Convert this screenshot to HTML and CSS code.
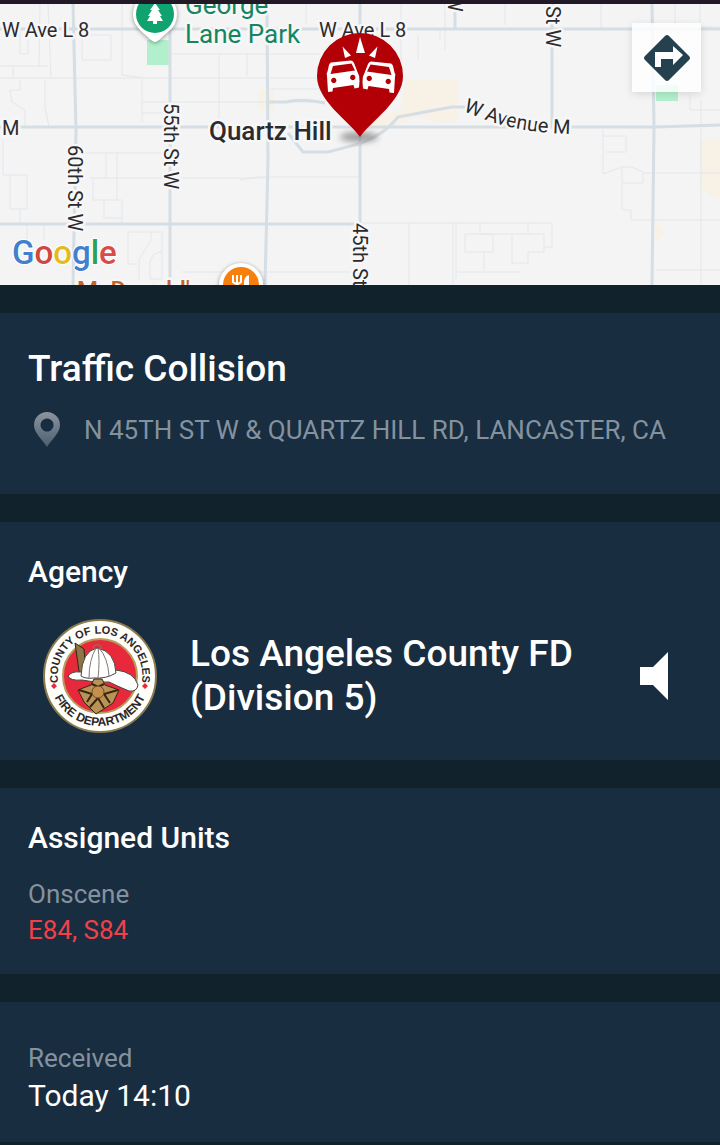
FILE: index.html
```
<!DOCTYPE html>
<html lang="en">
<head>
  <meta charset="UTF-8">
  <meta name="viewport" content="width=device-width, initial-scale=1.0">
  <title>Traffic Collision</title>
  <link rel="stylesheet" href="styles.css">
</head>
<body>

<!-- Map -->
<div class="map">
  <svg class="map-canvas" viewBox="0 4 720 281" preserveAspectRatio="xMidYMid slice" role="img" aria-label="Map of Quartz Hill">
    <defs>
      <path id="avenueM" d="M463 111 C 487 120, 515 135, 585 134" />
      <filter id="soft" x="-50%" y="-100%" width="200%" height="300%"><feGaussianBlur stdDeviation="3" /></filter>
    </defs>

    <!-- areas -->
    <path class="area-sand" d="M406 80 H457 V122 H436 L418 116 L385 130 L350 126 L400 110Z M259 90h15v20h-15z M701 140 H720 V200 L710 196 L701 188Z M655 222 q10 6 9 12 q-1 6 -9 6z" />
    <path class="area-green" d="M147 40h22v25h-22z M656 85h22v16h-22z" />

    <!-- small streets -->
    <g class="street">
      <path d="M0 66H48 M0 78H140 M40 4L39 66 M48 4L51 78 M20 30V54H28V22 M13 66V78 M82 35h29v25h-29z M20 80V90H10L12 102L25 110V126 M45 80V108L49 126" />
      <path d="M122 4V75L145 78H360 M172 54H320 M142 78V122 M142 102H320 M142 113H165 M219 54V126 M306 4V24 M3 140V175H27V209H10V175 M20 209V223" />
      <path d="M85 153H165 M90 178H265 M106 153V178 M117 153V200 M93 178V200H122V223 M104 200V218H122 M27 225V240 M44 225V240 M128 232H162V279H150V262Q152 252 162 252 M128 232V264H137 M151 232V240L139 260V280 M182 272H360" />
      <path d="M240 180L258 177H360 M270 89H320 M247 54V76 M401 4V80 M418 35V60 M440 28V40 M445 50V4 M505 4V25 M601 4V28 M675 4V23 M700 4V28 M701 27H720" />
      <path d="M362 223H552V247H544 M409 223V285 M453 223V285 M456 223V279 M465 234H493V252H465Z M457 272H520 M480 223V234H544V252H528V263H512V234 M528 223V234 M484 253V271" />
      <path d="M603 130V174L622 167H632L645 173H720 M603 136H626V152H606 M622 168V210H631V220H720 M643 173V183H623 M656 270H720 M701 100V285 M690 95V110H720" />
    </g>

    <!-- roads -->
    <g class="road">
      <path d="M0 29H720 M0 127H655L720 125 M0 224H362" />
      <path d="M73 4L76 130L73 285 M170 4V285 M267 4L268 160L265 285 M360 4V260 M455 4V29 M552 4V127 M652 4L654 127L652 285" />
      <path d="M268 102H286Q300 98 325 103 M288 133L303 152H328L362 143Q386 133 398 117L430 111L452 107H466" />
    </g>

    <!-- place labels -->
    <g class="label">
      <text x="2" y="37">W Ave L 8</text>
      <text x="319" y="37">W Ave L 8</text>
      <text x="2" y="135">M</text>
      <text transform="translate(164 103) rotate(90)">55th St W</text>
      <text transform="translate(68 145) rotate(90)">60th St W</text>
      <text transform="translate(353 223) rotate(90)">45th St W</text>
      <text transform="translate(546 6) rotate(90)">St W</text>
      <text transform="translate(448 -6) rotate(90)">W</text>
      <text><textPath href="#avenueM">W Avenue M</textPath></text>
    </g>
    <text class="label-city" x="209" y="140">Quartz Hill</text>
    <text class="label-park" x="185" y="14">George</text>
    <text class="label-park" x="185" y="43">Lane Park</text>
    <text class="label-food" x="77" y="298">McDonald's</text>

    <!-- park pin -->
    <path class="pin-rim" d="M155 -8a22 22 0 0 1 22 22q0 11-8 17l-10 9q-4 4-8 0l-10-9q-8-7-8-17a22 22 0 0 1 22-22z" />
    <circle cx="155" cy="14" r="19" fill="#10a36f" />
    <path fill="#fff" d="M155 3l5 7h-2l4 6h-2l3 5h-6v3h-4v-3h-6l3-5h-2l4-6h-2z" />

    <!-- restaurant pin -->
    <circle class="pin-rim" cx="241" cy="285" r="22" />
    <circle cx="241" cy="285" r="18" fill="#f77f0c" />
    <path fill="none" stroke="#fff" stroke-width="2" d="M233 275v7q4 4 8 0v-7 M237 275v12" />
    <path fill="#fff" d="M249 275v12h-5v-6q1-5 5-6z" />

    <!-- incident pin -->
    <ellipse cx="359" cy="137" rx="19" ry="5" fill="#777" opacity=".7" filter="url(#soft)" />
    <path fill="#b30006" d="M360 137C349 121 317 101 317 76a43 43 0 0 1 86 0c0 25-32 45-43 61z" />
    <g fill="#fff">
      <path d="M360 37l5 16h-9z M342.5 46.5l8.5 9-6 2.5z M377.5 46.5l-8.5 9 6 2.5z" />
      <path id="car" fill-rule="evenodd" d="M331 62.5L351 60.5Q353 60.5 354 63L357.5 72Q360 76 359.5 81L359 87.5L354.5 88.5L353.5 85L333 88L332.5 91.5L328 92L327 76Q326 73 327.5 71.5L329 65Q329.5 63 331 62.5Z M333 66L330.5 74L355 70.5L351.5 63.5Z M333.7 77.8a2.7 2.7 0 1 0 .1 0z M352.7 74.8a2.7 2.7 0 1 0 .1 0z" />
      <use href="#car" transform="matrix(-1 0 0 1 722 1)" />
    </g>

    <text class="map-brand" x="12" y="264"><tspan fill="#427fcc">G</tspan><tspan fill="#cf4740">o</tspan><tspan fill="#e6b91e">o</tspan><tspan fill="#427fcc">g</tspan><tspan fill="#2e9f57">l</tspan><tspan fill="#d94b48">e</tspan></text>
  </svg>

  <button class="directions-btn" type="button" aria-label="Directions">
    <svg width="48" height="48" viewBox="0 0 48 48">
      <path fill="#25404f" d="M22 2Q24 0 26 2L46 22Q48 24 46 26L26 46Q24 48 22 46L2 26Q0 24 2 22Z" />
      <path fill="#fff" d="M12 33V18H30V12L40 21L30 31V25H18V33Z" />
    </svg>
  </button>
</div>

<!-- Incident -->
<section class="card incident">
  <h1 class="title">Traffic Collision</h1>
  <div class="address">
    <svg class="address-icon" width="26" height="36" viewBox="0 0 26 36">
      <defs>
        <linearGradient id="pinFade" x1="0" y1="0" x2="0" y2="1">
          <stop offset="0" stop-color="#8b959f" />
          <stop offset="1" stop-color="#4b5e70" />
        </linearGradient>
      </defs>
      <path fill="url(#pinFade)" fill-rule="evenodd" d="M13 0a13 13 0 0 1 13 13c0 8-8 14-13 22C8 27 0 21 0 13A13 13 0 0 1 13 0z M13 6.500a6.500 6.500 0 1 0 .1 0z" />
    </svg>
    <span>N 45TH ST W &amp; QUARTZ HILL RD, LANCASTER, CA</span>
  </div>
</section>

<!-- Agency -->
<section class="card agency">
  <h2 class="heading">Agency</h2>
  <div class="agency-row">
    <svg class="seal" width="116" height="116" viewBox="0 0 116 116" role="img" aria-label="County of Los Angeles Fire Department">
      <defs>
        <path id="sealTop" d="M17.500 70A42.300 42.300 0 1 1 98.500 70" />
        <path id="sealBottom" d="M8 58a50 50 0 0 0 100 0" />
      </defs>
      <circle cx="58" cy="58" r="56" fill="#fffef8" stroke="#8a7c50" stroke-width="2" />
      <circle cx="58" cy="58" r="37" fill="#e8293b" stroke="#b99b60" stroke-width="2" />
      <g class="seal-text">
        <text text-anchor="middle"><textPath href="#sealTop" startOffset="50%">COUNTY OF LOS ANGELES</textPath></text>
        <text class="seal-bottom" text-anchor="middle"><textPath href="#sealBottom" startOffset="50%">FIRE DEPARTMENT</textPath></text>
      </g>
      <path fill="#e8293b" d="M12 65l3 3-3 3-3-3z M103 65l3 3-3 3-3-3z" />
      <!-- helmet -->
      <path fill="#8c7547" stroke="#332614" d="M33 25l9 6 2 26-6 3z" />
      <path fill="#fff" stroke="#4c423d" d="M26 58q4-5 12-4l36-2q18 2 22 15-1 7-9 6-12-5-20-9-14 1-27-2-12 1-14-4z" />
      <path fill="#fff" stroke="#4c423d" d="M39 58Q40 33 55 30q18 3 19 25-10 6-22 5-9 1-13-2z" />
      <path fill="none" stroke="#807a75" d="M54 30q-7 12-7 30 M56 30q2 12 0 30 M57 30q9 10 10 28 M51 30l2-3h5l2 4" />
      <!-- badge -->
      <path fill="#b99355" stroke="#38250f" d="M36 72L49 67L52 61H60L63 67L77 72L71 85L54 96L42 84Z" />
      <path fill="none" stroke="#38250f" stroke-width="2" d="M37 72L50 76L45 84 M76 72L62 76L68 85 M48 89L56 80L62 90 M50 66L56 69L62 66" />
      <circle cx="56" cy="74" r="6" fill="#c78f4d" stroke="#6b4a22" />
    </svg>
    <p class="agency-name">Los Angeles County FD (Division 5)</p>
    <button class="sound-btn" type="button" aria-label="Listen">
      <svg width="28" height="48" viewBox="0 0 28 48"><path fill="#fff" d="M0 15H13L28 0V48L13 33H0Z" /></svg>
    </button>
  </div>
</section>

<!-- Units -->
<section class="card units">
  <h2 class="heading">Assigned Units</h2>
  <p class="caption">Onscene</p>
  <p class="unit-list">E84, S84</p>
</section>

<!-- Time -->
<section class="card received">
  <p class="caption">Received</p>
  <p class="time">Today 14:10</p>
</section>

</body>
</html>
```

FILE: styles.css
```
/* General Styling */
* {
  box-sizing: border-box;
}

body {
  margin: 0;
  background-color: #11222d;
  color: #ffffff;
  font-family: Roboto, sans-serif;
}

h1, h2, p {
  margin: 0;
  font-weight: 500;
}

button {
  display: flex;
  align-items: center;
  justify-content: center;
  padding: 0;
  border: none;
  background: none;
  cursor: pointer;
}

/* Map */
.map {
  position: relative;
  border-top: 4px solid #211a26;
}

.map-canvas {
  display: block;
  width: 100%;
  height: 281px;
  background-color: #f4f4f5;
}

.area-sand {
  fill: #f7f1e6;
}

.area-green {
  fill: #b2f0cd;
}

.street {
  fill: none;
  stroke: #e4e6ea;
  stroke-width: 1;
}

.road {
  fill: none;
  stroke: #d5dee4;
  stroke-width: 3;
}

.label,
.label-city,
.label-park,
.label-food {
  font-size: 20px;
  fill: #2b2b2e;
  stroke: #f7f7f8;
  stroke-width: 5px;
  stroke-linejoin: round;
  paint-order: stroke;
}

.label-city {
  font-size: 26px;
  font-weight: 500;
}

.label-park {
  font-size: 26px;
  fill: #158560;
}

.label-food {
  font-size: 24px;
  font-weight: 500;
  fill: #c1652a;
}

.pin-rim {
  fill: #ffffff;
  filter: drop-shadow(0 1px 2px rgba(0, 0, 0, 0.4));
}

.map-brand {
  font-size: 33px;
  font-weight: 500;
  stroke: #ffffff;
  stroke-width: 2px;
  paint-order: stroke;
}

.directions-btn {
  position: absolute;
  top: 19px;
  right: 19px;
  width: 69px;
  height: 69px;
  background-color: rgba(255, 255, 255, 0.8);
  box-shadow: 0 2px 8px rgba(0, 0, 0, 0.12);
}

/* Cards */
.card {
  margin-top: 28px;
  padding: 32px 28px 26px;
  background-color: #182d40;
}

.title {
  font-size: 37px;
  line-height: 48px;
}

.heading {
  font-size: 30px;
  line-height: 36px;
}

.caption {
  color: #84929f;
  font-size: 26px;
  font-weight: 400;
  line-height: 36px;
}

/* Incident */
.incident {
  padding-bottom: 46px;
}

.address {
  display: flex;
  align-items: center;
  gap: 24px;
  margin-top: 19px;
  padding-left: 6px;
  color: #84929f;
  font-size: 26px;
  line-height: 36px;
}

.address-icon {
  flex: none;
}

/* Agency */
.agency-row {
  display: flex;
  align-items: center;
  margin-top: 28px;
  padding: 0 24px 0 14px;
}

.seal {
  flex: none;
}

.seal-text {
  fill: #29272b;
  font-family: "Liberation Sans", sans-serif;
  font-size: 11px;
  font-weight: bold;
}

.seal-bottom {
  font-size: 12px;
}

.agency-name {
  flex: 1;
  margin: 0 32px;
  font-size: 37px;
  line-height: 44px;
}

/* Units */
.units .caption {
  margin-top: 20px;
}

.unit-list {
  color: #f04148;
  font-size: 26px;
  font-weight: 400;
  line-height: 36px;
}

/* Received */
.received {
  padding-top: 38px;
}

.time {
  font-size: 30px;
  font-weight: 400;
  line-height: 40px;
}
```
